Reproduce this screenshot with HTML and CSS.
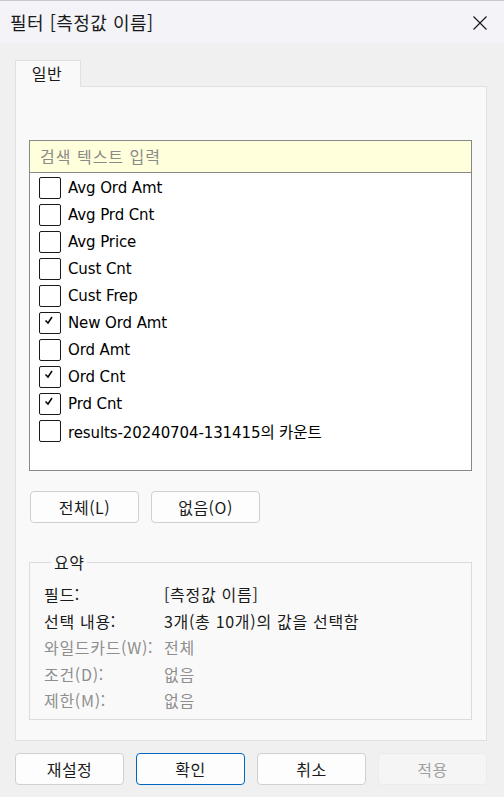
FILE: index.html
```html
<!DOCTYPE html>
<html lang="ko">
<head>
<meta charset="utf-8">
<link rel="stylesheet" href="styles.css">
</head>
<body>
<div class="window">
  <div class="titlebar">
    <span class="title">필터 [측정값 이름]</span>
    <svg class="close" width="16" height="16" viewBox="0 0 16 16"><path d="M1.5 1.5 L14.5 14.5 M14.5 1.5 L1.5 14.5" stroke="#1a1a1a" stroke-width="1.2" fill="none"/></svg>
  </div>
  <div class="content">
    <div class="tabs"><div class="tab">일반</div></div>
    <div class="panel">
      <div class="listbox">
        <div class="search">검색 텍스트 입력</div>
        <div class="items">
          <div class="item"><span class="cb"></span><span class="lbl">Avg Ord Amt</span></div>
          <div class="item"><span class="cb"></span><span class="lbl">Avg Prd Cnt</span></div>
          <div class="item"><span class="cb"></span><span class="lbl">Avg Price</span></div>
          <div class="item"><span class="cb"></span><span class="lbl">Cust Cnt</span></div>
          <div class="item"><span class="cb"></span><span class="lbl">Cust Frep</span></div>
          <div class="item"><span class="cb on"><svg width="10" height="9" viewBox="0 0 10 9"><path d="M1.5 4.5 L4 7 L8 1" stroke="#000" stroke-width="1.5" fill="none"/></svg></span><span class="lbl">New Ord Amt</span></div>
          <div class="item"><span class="cb"></span><span class="lbl">Ord Amt</span></div>
          <div class="item"><span class="cb on"><svg width="10" height="9" viewBox="0 0 10 9"><path d="M1.5 4.5 L4 7 L8 1" stroke="#000" stroke-width="1.5" fill="none"/></svg></span><span class="lbl">Ord Cnt</span></div>
          <div class="item"><span class="cb on"><svg width="10" height="9" viewBox="0 0 10 9"><path d="M1.5 4.5 L4 7 L8 1" stroke="#000" stroke-width="1.5" fill="none"/></svg></span><span class="lbl">Prd Cnt</span></div>
          <div class="item"><span class="cb"></span><span class="lbl">results-20240704-131415<span class="ko">의 카운트</span></span></div>
        </div>
      </div>
      <div class="selbtns">
        <button class="btn">전체(L)</button>
        <button class="btn">없음(O)</button>
      </div>
      <fieldset class="summary">
        <legend>요약</legend>
        <div class="grid">
          <span>필드:</span><span>[측정값 이름]</span>
          <span>선택 내용:</span><span>3개(총 10개)의 값을 선택함</span>
          <span class="dim">와일드카드(W):</span><span class="dim">전체</span>
          <span class="dim">조건(D):</span><span class="dim">없음</span>
          <span class="dim">제한(M):</span><span class="dim">없음</span>
        </div>
      </fieldset>
    </div>
    <div class="footer">
      <button class="btn fb">재설정</button>
      <button class="btn fb primary">확인</button>
      <button class="btn fb">취소</button>
      <button class="btn fb disabled">적용</button>
    </div>
  </div>
</div>
</body>
</html>
```

FILE: styles.css
```css
* { box-sizing: border-box; }
html, body { margin: 0; padding: 0; }
body {
  width: 504px;
  height: 797px;
  background: #f0f0f0;
  font-family: "Noto Sans CJK KR", "Noto Sans", sans-serif;
  color: #1a1a1a;
  overflow: hidden;
}
.window { width: 504px; height: 797px; display: flex; flex-direction: column; }
.titlebar {
  height: 43px;
  background: #f3f3f8;
  display: flex;
  align-items: center;
  justify-content: space-between;
  padding: 0 16px 0 10px;
  border-top: 1px solid #c8c8cc;
}
.title { font-size: 18px; line-height: 22px; color: #1a1a1a; letter-spacing: 0.5px; }
.close { display: block; margin-top: 1px; }
.content { flex: 1; padding: 17px 17px 0 15px; display: flex; flex-direction: column; }
.tabs { display: flex; height: 26px; }
.tab {
  width: 66px;
  height: 27px;
  background: #f9f9f9;
  border: 1px solid #e0e0e0;
  border-bottom: none;
  font-size: 16px;
  line-height: 24px;
  text-align: center;
  padding-right: 2px;
  letter-spacing: 0.5px;
  position: relative;
  z-index: 1;
}
.panel {
  height: 655px;
  background: #f9f9f9;
  border: 1px solid #e0e0e0;
  padding: 53px 15px 0 13px;
  display: flex;
  flex-direction: column;
}
.listbox {
  width: 443px;
  height: 331px;
  border: 1px solid #888;
  background: #fff;
  display: flex;
  flex-direction: column;
}
.search {
  height: 32px;
  background: #ffffdc;
  border-bottom: 1px solid #888;
  color: #8a8a8a;
  font-size: 16px;
  line-height: 30px;
  padding-left: 10px;
  letter-spacing: 1px;
}
.items { padding-top: 1px; }
.item { height: 27px; display: flex; align-items: center; padding-left: 9px; }
.cb {
  width: 22px;
  height: 22px;
  border: 1px solid #1a1a1a;
  border-radius: 2px;
  background: #fff;
  display: flex;
  align-items: flex-start;
  justify-content: center;
  padding-top: 3px;
  padding-right: 2px;
  flex: none;
}
.lbl {
  margin-left: 7px;
  font-family: "DejaVu Sans", sans-serif;
  font-size: 15px;
  color: #000;
  letter-spacing: -0.1px;
}
.ko { font-family: "Noto Sans CJK KR", sans-serif; font-size: 15.5px; letter-spacing: 0; }
.selbtns { display: flex; gap: 12px; margin-top: 20px; padding-left: 1px; }
.btn {
  width: 109px;
  height: 32px;
  background: #fdfdfd;
  border: 1px solid #d0d0d0;
  border-radius: 4px;
  font-family: "Noto Sans CJK KR", sans-serif;
  font-size: 16px;
  letter-spacing: 0.5px;
  color: #1a1a1a;
  padding: 0;
  line-height: 28px;
}
.summary {
  margin: 30px 0 0 0;
  width: 443px;
  height: 167px;
  border: 1px solid #dcdcdc;
  padding: 10px 0 0 14px;
  min-width: 0;
}
.summary legend { font-size: 16px; padding: 0 3px; margin-left: 7px; line-height: 18px; letter-spacing: 0.5px; }
.grid {
  display: grid;
  grid-template-columns: 120px 1fr;
  grid-auto-rows: 26.5px;
  font-size: 16px;
  letter-spacing: 0.7px;
  align-items: center;
}
.dim { color: #8e8e8e; }
.footer { display: flex; gap: 12px; margin-top: 12px; }
.fb { height: 32px; }
.primary { border-color: #0067c0; }
.disabled { background: #f5f5f5; border-color: #ebebeb; color: #a0a0a0; }
```
